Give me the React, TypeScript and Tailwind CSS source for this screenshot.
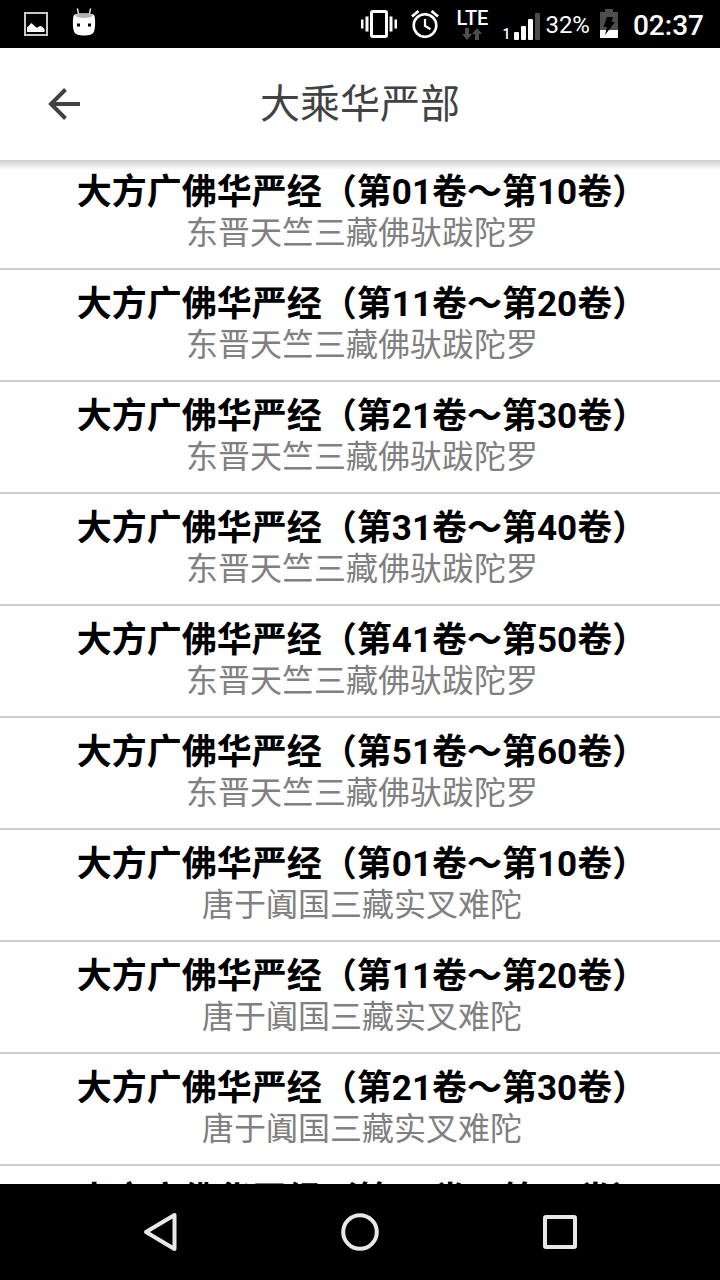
const EASTERN_JIN = "东晋天竺三藏佛驮跋陀罗";
const TANG = "唐于阗国三藏实叉难陀";

const volumes = [
  { title: "大方广佛华严经（第01卷～第10卷）", translator: EASTERN_JIN },
  { title: "大方广佛华严经（第11卷～第20卷）", translator: EASTERN_JIN },
  { title: "大方广佛华严经（第21卷～第30卷）", translator: EASTERN_JIN },
  { title: "大方广佛华严经（第31卷～第40卷）", translator: EASTERN_JIN },
  { title: "大方广佛华严经（第41卷～第50卷）", translator: EASTERN_JIN },
  { title: "大方广佛华严经（第51卷～第60卷）", translator: EASTERN_JIN },
  { title: "大方广佛华严经（第01卷～第10卷）", translator: TANG },
  { title: "大方广佛华严经（第11卷～第20卷）", translator: TANG },
  { title: "大方广佛华严经（第21卷～第30卷）", translator: TANG },
  { title: "大方广佛华严经（第31卷～第40卷）", translator: TANG },
];

function StatusBar() {
  return (
    <div className="flex h-12 shrink-0 items-center justify-between bg-black pl-6 pr-4 text-white">
      <div className="flex items-center gap-6">
        <svg width="24" height="24" viewBox="0 0 24 24" aria-hidden="true">
          <rect x="1" y="1" width="22" height="22" fill="none" stroke="#c9c9c9" strokeWidth="2" />
          <path d="M3 20v-4.500L7.500 11l4 4 1.500.8L16 14l2 .6 2.500 2.400V20z" fill="#fff" />
        </svg>
        <svg className="mb-1" width="24" height="32" viewBox="0 0 24 32" aria-hidden="true">
          <path d="M5.500 3l1.300 6M18.500 3l-1.300 6" stroke="#ddd" strokeWidth="1.500" strokeLinecap="round" />
          <path d="M1.500 10C2 8 6 7.500 12 7.500s10 .5 10.500 2.500c1 5 .8 12-.5 15.500-1.200 3-5 4-10 4s-8.800-1-10-4C.700 22 .500 15 1.500 10z" fill="#fff" />
          <path d="M3 9.500C4.500 8 8 7.500 12 7.500s7.500.5 9 2c-1.500 1.800-5 2.500-9 2.500S4.500 11.300 3 9.500z" fill="#b5b5b5" />
          <path d="M5 17.500h3v3H5zM16 17.500h3v3h-3z" fill="#000" />
        </svg>
      </div>
      <div className="flex items-center">
        <svg width="36" height="28" viewBox="0 0 36 28" aria-hidden="true">
          <rect x="10.500" y="1.500" width="15" height="25" rx="1.500" fill="none" stroke="#fff" strokeWidth="3" />
          <path d="M0 9.500h2.500v9H0zM4.500 6.500h3v15h-3zM28.500 6.500h3v15h-3zM33.500 9.500H36v9h-2.500z" fill="#fff" />
        </svg>
        <svg className="ml-3.5" width="28" height="28" viewBox="0 0 28 28" fill="none" stroke="#fff" aria-hidden="true">
          <circle cx="14" cy="15.500" r="11.300" strokeWidth="2.600" />
          <path d="M1 6.500l6.500-5.500M27 6.500L20.500 1" strokeWidth="2.800" />
          <path d="M14 9v7l5.500 3.300" strokeWidth="2.200" />
        </svg>
        <div className="ml-[18px] flex h-8 flex-col items-center">
          <span className="text-xl/5 font-medium">LTE</span>
          <svg width="20" height="12" viewBox="0 0 20 12" fill="#4d4d4d" aria-hidden="true">
            <path d="M3 0h4v6h3l-5 6-5-6h3zM13 12h4V6h3l-5-6-5 6h3z" />
          </svg>
        </div>
        <div className="ml-3.5 flex h-8 items-end">
          <span className="mr-1 text-sm/3 font-medium">1</span>
          <svg width="26" height="27" viewBox="0 0 26 27" fill="#fff" aria-hidden="true">
            <rect x="0" y="19" width="5" height="8" rx="1" />
            <rect x="7" y="13" width="5" height="14" rx="1" />
            <rect x="14" y="6" width="5" height="21" rx="1" />
            <rect x="21" y="0" width="5" height="27" rx="1" fill="#4d4d4d" />
          </svg>
        </div>
        <span className="ml-[5px] pt-0.5 text-2xl/7">32%</span>
        <svg className="ml-[9px]" width="20" height="30" viewBox="0 0 20 30" aria-hidden="true">
          <path d="M6 0h8v3h5v18H1V3h5z" fill="#4d4d4d" />
          <path d="M1 21h18v8H1z" fill="#fff" />
          <path d="M8 8h6l-1.500 5H16L6 26l2-8H4.500z" fill="#000" />
        </svg>
        <span className="ml-3.5 pt-1 text-[28px]/8 font-medium">02:37</span>
      </div>
    </div>
  );
}

function Header() {
  return (
    <header className="relative z-10 grid h-28 shrink-0 grid-cols-[128px_1fr_128px] items-center bg-white">
      <button type="button" aria-label="返回" className="flex h-28 items-center justify-center">
        <svg width="32" height="32" viewBox="0 0 32 32" fill="none" stroke="#424242" strokeWidth="4" aria-hidden="true">
          <path d="M32 16H3M17.500 1.500L3 16l14.500 14.500" />
        </svg>
      </button>
      <h1 className="pt-0.5 text-center text-[40px]/[56px] font-normal text-[#424242]">大乘华严部</h1>
      <div className="absolute inset-x-0 top-full h-2.5 bg-linear-to-b from-black/20 to-transparent" />
    </header>
  );
}

function NavigationBar() {
  return (
    <nav aria-label="系统导航" className="z-10 grid h-24 shrink-0 grid-cols-3 bg-black px-[60px]">
      <button type="button" aria-label="后退" className="flex items-center justify-center">
        <svg width="40" height="40" viewBox="0 0 40 40" fill="none" stroke="#e8e8e8" strokeWidth="4" strokeLinejoin="round" aria-hidden="true">
          <path d="M34.500 3v34L6 20z" />
        </svg>
      </button>
      <button type="button" aria-label="主页" className="flex items-center justify-center">
        <svg width="40" height="40" viewBox="0 0 40 40" fill="none" stroke="#e8e8e8" strokeWidth="4" aria-hidden="true">
          <circle cx="20" cy="20" r="16.800" />
        </svg>
      </button>
      <button type="button" aria-label="最近任务" className="flex items-center justify-center">
        <svg width="40" height="40" viewBox="0 0 40 40" fill="none" stroke="#e8e8e8" strokeWidth="4" aria-hidden="true">
          <rect x="5" y="5" width="30" height="30" rx="1" />
        </svg>
      </button>
    </nav>
  );
}

export default function App() {
  return (
    <div className="flex h-screen flex-col bg-white font-[Roboto,'Noto_Sans_CJK_SC',sans-serif]" lang="zh-CN">
      <StatusBar />
      <Header />
      <main className="-mt-0.5 min-h-0 flex-1 overflow-y-auto [scrollbar-width:none]">
        <ul>
          {volumes.map((volume, index) => (
            <li key={index} className="border-b-2 border-[#d0d0d0]">
              <a href={`#volume-${index + 1}`} className="block py-[15px] pl-1 text-center">
                <span className="block text-[35px]/10 font-bold text-black">{volume.title}</span>
                <span className="block text-[32px]/10 text-[#808080]">{volume.translator}</span>
              </a>
            </li>
          ))}
        </ul>
      </main>
      <NavigationBar />
    </div>
  );
}
